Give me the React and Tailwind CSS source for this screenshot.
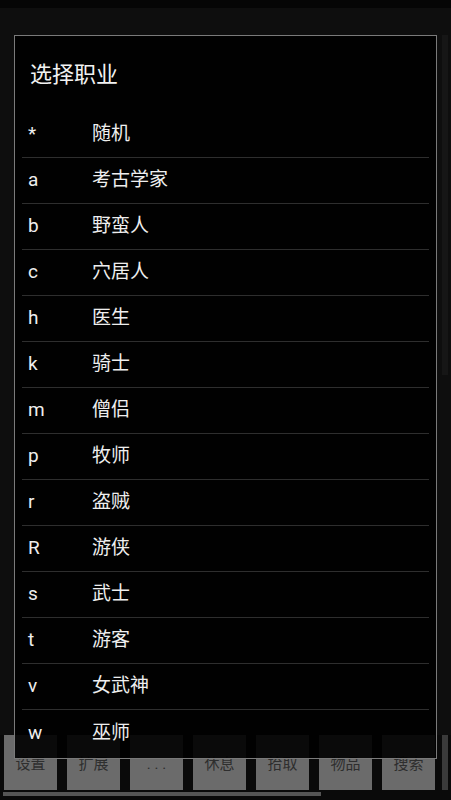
const roles = [
  ["*", "随机"],
  ["a", "考古学家"],
  ["b", "野蛮人"],
  ["c", "穴居人"],
  ["h", "医生"],
  ["k", "骑士"],
  ["m", "僧侣"],
  ["p", "牧师"],
  ["r", "盗贼"],
  ["R", "游侠"],
  ["s", "武士"],
  ["t", "游客"],
  ["v", "女武神"],
  ["w", "巫师"],
];

const tools = ["设置", "扩展", ". . .", "休息", "拾取", "物品", "搜索"];

export default function App() {
  return (
    <div
      className="relative w-[451px] h-[800px] overflow-hidden bg-[#0e0e0e] flex flex-col"
      style={{ fontFamily: 'Roboto, "Noto Sans CJK SC", sans-serif' }}
    >
      <div className="h-[8px] bg-[#050505] shrink-0" />
      <div className="flex-1 flex">
        <div className="flex-1" />
        <div className="w-[6px] mr-[3px] mt-[27px] h-[340px] bg-[#161616]" />
      </div>

      {/* bottom toolbar */}
      <div className="shrink-0 h-[65px] bg-[#0a0a0a] flex flex-col">
        <div className="flex items-start">
          <div className="flex gap-[10px] pl-[4px]">
            {tools.map((t) => (
              <div
                key={t}
                className="w-[53px] h-[55px] bg-[#6b6b6b] flex items-center justify-center pt-[4px] text-[15px] text-[#2e2e2e]"
              >
                {t}
              </div>
            ))}
          </div>
          <div className="ml-auto mr-[3px] w-[6px] h-[55px] bg-[#3a3a3a]" />
        </div>
        <div className="mt-[2px] ml-[3px] w-[318px] h-[4px] bg-[#555]" />
      </div>

      {/* dialog */}
      <div className="absolute left-[14px] top-[35px] w-[423px] h-[724px] border border-[#7a7a7a] bg-black/90 px-[7px]">
        <div className="h-[76px] flex items-center pl-[8px] text-[22px] text-[#f2f2f2]">
          选择职业
        </div>
        {roles.map(([k, name], i) => (
          <div
            key={k}
            className={
              "h-[46px] flex items-center text-[19px] text-[#eeeeee] " +
              (i < roles.length - 1 ? "border-b border-[#2e2e2e]" : "")
            }
          >
            <span className="w-[70px] pl-[6px]">{k}</span>
            <span>{name}</span>
          </div>
        ))}
      </div>
    </div>
  );
}
